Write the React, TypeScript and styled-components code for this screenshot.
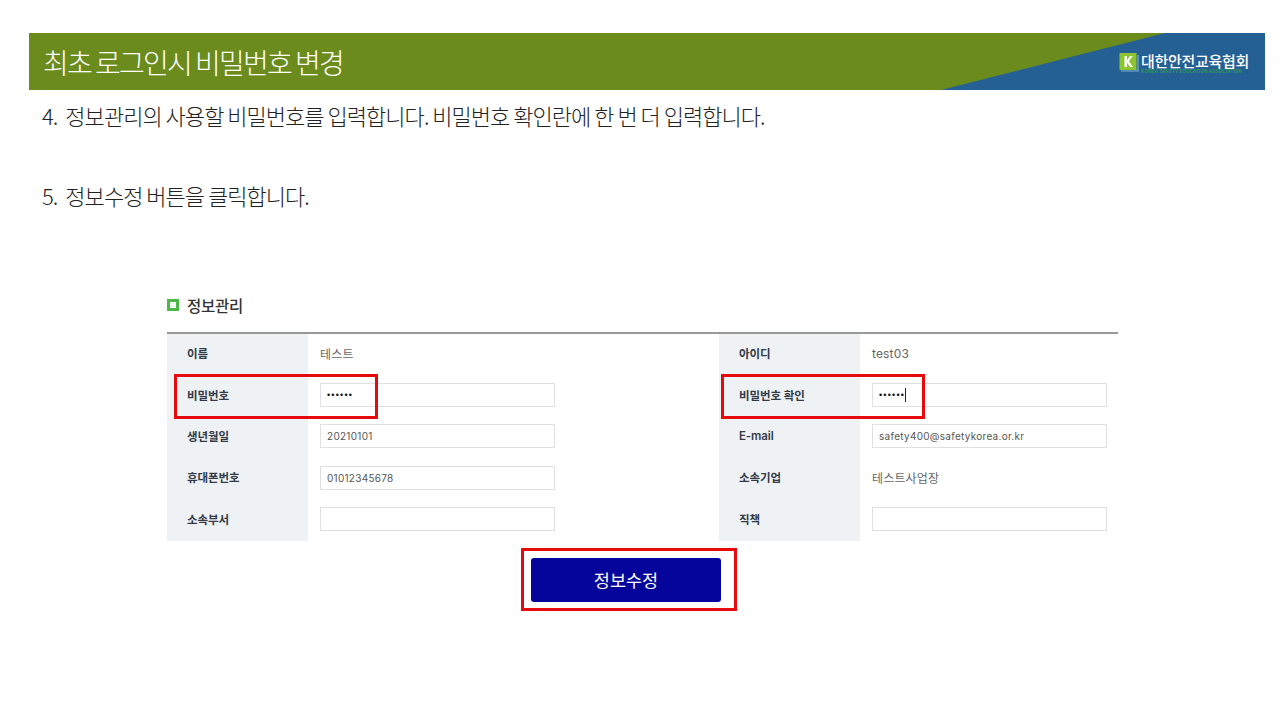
import styled, { createGlobalStyle } from 'styled-components';

const KR = `"Noto Sans CJK KR", sans-serif`;
const FORM_FONT = `Inter, "Noto Sans CJK KR", sans-serif`;

const GlobalStyle = createGlobalStyle`
  html, body {
    margin: 0;
    padding: 0;
    background: #ffffff;
  }
  body {
    font-family: ${KR};
  }
`;

type Field = {
  label: string;
  text?: string;
  value?: string;
  dots?: boolean;
  caret?: boolean;
  markLeft?: number;
};

const leftFields: Field[] = [
  { label: '이름', text: '테스트' },
  { label: '비밀번호', dots: true, markLeft: 7 },
  { label: '생년월일', value: '20210101' },
  { label: '휴대폰번호', value: '01012345678' },
  { label: '소속부서', value: '' },
];

const rightFields: Field[] = [
  { label: '아이디', text: 'test03' },
  { label: '비밀번호 확인', dots: true, caret: true, markLeft: 2 },
  { label: 'E-mail', value: 'safety400@safetykorea.or.kr' },
  { label: '소속기업', text: '테스트사업장' },
  { label: '직책', value: '' },
];

function FieldRow({ field }: { field: Field }) {
  return (
    <Row>
      <Label>{field.label}</Label>
      <Cell>
        {field.text !== undefined ? (
          <PlainText>{field.text}</PlainText>
        ) : (
          <InputBox>
            {field.dots ? <Dots>••••••</Dots> : field.value}
            {field.caret && <Caret />}
          </InputBox>
        )}
      </Cell>
      {field.markLeft !== undefined && <Highlight $left={field.markLeft} />}
    </Row>
  );
}

export default function App() {
  return (
    <>
      <GlobalStyle />
      <Page>
        <Banner>
          <BannerTitle>최초 로그인시 비밀번호 변경</BannerTitle>
          <Logo>
            <LogoMark viewBox="0 0 20 20">
              <path d="M2 19h17V3" fill="none" stroke="#7fb2d8" strokeWidth="1.2" />
              <rect x="0.5" y="1" width="17" height="17" fill="#8fc431" />
              <path d="M5.5 4v11h2.4v-4.6L11.2 15H14L9.9 9.3 13.6 4H11L7.9 8.5V4z" fill="#ffffff" />
            </LogoMark>
            <LogoText>
              <LogoName>대한안전교육협회</LogoName>
              <LogoSub>KOREA SAFETY EDUCATION ASSOCIATION</LogoSub>
            </LogoText>
          </Logo>
        </Banner>

        <Step>
          <StepNumber>4.</StepNumber>정보관리의 사용할 비밀번호를 입력합니다. 비밀번호 확인란에 한 번 더 입력합니다.
        </Step>
        <Step $gap>
          <StepNumber>5.</StepNumber>정보수정 버튼을 클릭합니다.
        </Step>

        <FormPanel>
          <SectionTitle>
            <SectionIcon />
            정보관리
          </SectionTitle>
          <FormGrid>
            <Column>
              {leftFields.map((f) => (
                <FieldRow key={f.label} field={f} />
              ))}
            </Column>
            <Column>
              {rightFields.map((f) => (
                <FieldRow key={f.label} field={f} />
              ))}
            </Column>
          </FormGrid>
          <ButtonRow>
            <ButtonFrame>
              <SubmitButton type="button">정보수정</SubmitButton>
            </ButtonFrame>
          </ButtonRow>
        </FormPanel>
      </Page>
    </>
  );
}

const Page = styled.div`
  width: 1280px;
  height: 720px;
  padding-top: 33px;
  box-sizing: border-box;
  overflow: hidden;
  background: #ffffff;
`;

const Banner = styled.div`
  position: relative;
  display: flex;
  align-items: center;
  justify-content: space-between;
  height: 57px;
  margin: 0 15px 0 29px;
  padding: 0 16px 0 14px;
  background: #6b8c1c;

  &::before {
    content: '';
    position: absolute;
    inset: 0;
    background: #256094;
    clip-path: polygon(1136px 0, 100% 0, 100% 100%, 912px 100%);
  }
`;

const BannerTitle = styled.h1`
  position: relative;
  margin: 0;
  font-family: ${KR};
  font-size: 28px;
  font-weight: 300;
  letter-spacing: -1.75px;
  word-spacing: -0.5px;
  color: #ffffff;
`;

const Logo = styled.div`
  position: relative;
  display: flex;
  align-items: center;
  gap: 2px;
`;

const LogoMark = styled.svg`
  width: 20px;
  height: 20px;
`;

const LogoText = styled.div`
  display: flex;
  flex-direction: column;
  width: 108px;
  padding-top: 3px;
`;

const LogoName = styled.span`
  font-family: ${KR};
  font-size: 15px;
  font-weight: 500;
  line-height: 15px;
  letter-spacing: -0.3px;
  white-space: nowrap;
  color: #ffffff;
`;

const LogoSub = styled.span`
  margin-top: 1px;
  font-family: "Liberation Sans", sans-serif;
  font-size: 4.6px;
  font-weight: 700;
  line-height: 5px;
  white-space: nowrap;
  letter-spacing: 0.12px;
  color: #2f9a58;
`;

const Step = styled.p<{ $gap?: boolean }>`
  margin: ${(p) => (p.$gap ? '48px' : '9px')} 0 0 42px;
  font-family: ${KR};
  font-size: 22px;
  font-weight: 300;
  line-height: 32px;
  letter-spacing: -0.97px;
  color: #222222;
`;

const StepNumber = styled.span`
  margin-right: 8px;
`;

const FormPanel = styled.section`
  width: 951px;
  margin: 81px 0 0 167px;
`;

const SectionTitle = styled.h2`
  display: flex;
  align-items: center;
  gap: 8px;
  height: 26px;
  margin: 0 0 14px;
  font-family: ${KR};
  font-size: 15.5px;
  font-weight: 500;
  letter-spacing: -0.3px;
  color: #333333;
`;

const SectionIcon = styled.span`
  width: 12px;
  height: 12px;
  box-sizing: border-box;
  border: 3px solid #4cb848;
  background: #f4fbf2;
`;

const FormGrid = styled.div`
  display: grid;
  grid-template-columns: 552px 399px;
  border-top: 2px solid #999999;
`;

const Column = styled.div`
  display: flex;
  flex-direction: column;
`;

const Row = styled.div`
  position: relative;
  display: flex;
  height: 41.4px;
`;

const Label = styled.div`
  display: flex;
  align-items: center;
  width: 141px;
  padding: 0 0 3px 20px;
  box-sizing: border-box;
  background: #eff2f5;
  font-family: ${FORM_FONT};
  font-size: 11.5px;
  font-weight: 600;
  letter-spacing: -0.1px;
  color: #333a45;
`;

const Cell = styled.div`
  display: flex;
  align-items: center;
  flex: 1;
  padding: 0 0 2px 12px;
`;

const PlainText = styled.span`
  font-family: ${FORM_FONT};
  font-size: 12px;
  letter-spacing: 0.15px;
  color: #666666;
`;

const InputBox = styled.div`
  display: flex;
  align-items: center;
  width: 235px;
  height: 24px;
  padding-left: 6px;
  box-sizing: border-box;
  border: 1px solid #e0e0e0;
  background: #ffffff;
  font-family: ${FORM_FONT};
  font-size: 10px;
  letter-spacing: 0.28px;
  color: #555555;
`;

const Dots = styled.span`
  font-family: "Liberation Sans", sans-serif;
  font-size: 9px;
  letter-spacing: 1.2px;
  color: #111111;
`;

const Caret = styled.span`
  width: 1px;
  height: 14px;
  background: #222222;
`;

const Highlight = styled.span<{ $left: number }>`
  position: absolute;
  z-index: 1;
  top: -1px;
  left: ${(p) => p.$left}px;
  width: 204px;
  height: 45px;
  box-sizing: border-box;
  border: 3px solid #e60a0a;
`;

const ButtonRow = styled.div`
  display: flex;
  margin: 7px 0 0 354px;
`;

const ButtonFrame = styled.div`
  padding: 7px 13px 6px 7px;
  border: 3px solid #e60a0a;
`;

const SubmitButton = styled.button`
  display: block;
  width: 190px;
  height: 44px;
  padding: 0;
  border: none;
  border-radius: 3px;
  background: #05059b;
  font-family: ${KR};
  font-size: 17.5px;
  font-weight: 400;
  color: #ffffff;
`;
